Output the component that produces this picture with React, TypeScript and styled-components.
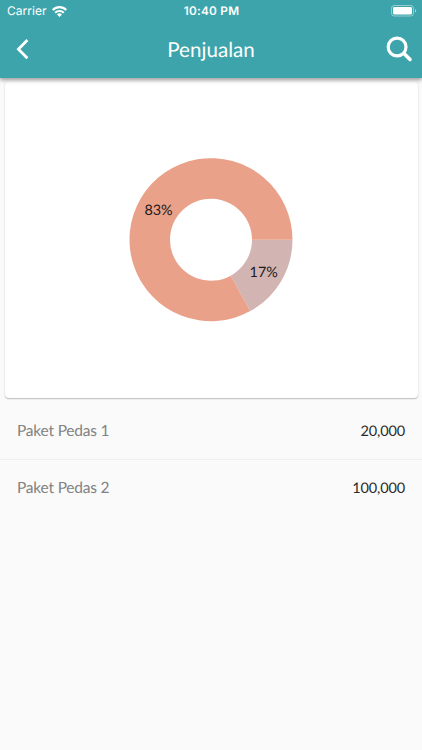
import React from "react";
import styled, { createGlobalStyle } from "styled-components";

const GlobalStyle = createGlobalStyle`
  * { box-sizing: border-box; }
  body {
    margin: 0;
    background: #fafafa;
    font-family: Lato, sans-serif;
    text-rendering: geometricPrecision;
  }
`;

const Screen = styled.main`
  display: flex;
  flex-direction: column;
  height: 750px;
  overflow: hidden;
  background: #fafafa;
`;

const Header = styled.header`
  position: relative;
  z-index: 1;
  height: 78px;
  flex: none;
  background: #3da4ab;
  color: #fff;
  box-shadow: 0 2px 4px rgba(0, 0, 0, 0.32), 0 1px 6px rgba(0, 0, 0, 0.12);
`;

const StatusBar = styled.div`
  display: grid;
  grid-template-columns: 1fr auto 1fr;
  align-items: center;
  height: 22px;
  padding: 0 6px 0 7px;
  font-family: Inter, sans-serif;
  font-size: 12px;
  line-height: 22px;
`;

const Carrier = styled.div`
  display: flex;
  align-items: center;
  gap: 5px;
  letter-spacing: 0.05px;
`;

const Clock = styled.div`
  font-size: 11.8px;
  font-weight: 600;
  letter-spacing: 0.25px;
`;

const Battery = styled.svg`
  justify-self: end;
  margin-right: -1px;
`;

const Toolbar = styled.div`
  display: grid;
  grid-template-columns: 48px 1fr 48px;
  align-items: center;
  height: 56px;
`;

const IconButton = styled.button`
  display: flex;
  width: 48px;
  height: 56px;
  padding: 0;
  border: 0;
  background: none;
  color: inherit;
`;

const Title = styled.h1`
  margin: 0;
  padding-top: 1px;
  font-size: 20.6px;
  font-weight: 400;
  line-height: 55px;
  text-align: center;
`;

const ChartCard = styled.section`
  flex: none;
  height: 316px;
  margin: 4px 4px 4px 5px;
  border-radius: 4px;
  background: #fff;
  box-shadow: 0 1px 1.5px rgba(0, 0, 0, 0.25), 0 0 1px rgba(0, 0, 0, 0.06);
`;

const ChartLabel = styled.text`
  font-family: Lato, sans-serif;
  font-size: 14.4px;
  fill: #211b1a;
  text-anchor: middle;
`;

const List = styled.ul`
  margin: 0;
  padding: 0;
  list-style: none;
`;

const Row = styled.li`
  display: flex;
  align-items: center;
  justify-content: space-between;
  height: 57px;
  padding: 1px 17px 0;
  font-size: 15.5px;

  & + & {
    border-top: 1px solid #f0f0f0;
    padding-top: 0;
  }
`;

const ItemName = styled.span`
  color: #828282;
  letter-spacing: -0.2px;
`;

const Amount = styled.span`
  padding-top: 1px;
  color: #2b2b2b;
  font-size: 14.5px;
  letter-spacing: -0.15px;
`;

const CX = 206;
const CY = 157.7;
const OUTER = 81.5;
const INNER = 41;

function slicePath(from: number, to: number) {
  const point = (radius: number, share: number) => {
    const angle = share * Math.PI * 2;
    return `${CX + radius * Math.cos(angle)} ${CY + radius * Math.sin(angle)}`;
  };
  const large = to - from > 0.5 ? 1 : 0;
  return `M${point(OUTER, from)} A${OUTER} ${OUTER} 0 ${large} 1 ${point(OUTER, to)} L${point(INNER, to)} A${INNER} ${INNER} 0 ${large} 0 ${point(INNER, from)}Z`;
}

const items = [
  { name: "Paket Pedas 1", amount: "20,000" },
  { name: "Paket Pedas 2", amount: "100,000" },
];

export default function App() {
  return (
    <Screen>
      <GlobalStyle />
      <Header>
        <StatusBar>
          <Carrier>
            Carrier
            <svg width="15" height="11" viewBox="0 0 15 11" fill="none" stroke="#fff" strokeWidth="2.1">
              <path d="M.7 4a9.5 9.5 0 0 1 13.6 0" />
              <path d="M3.2 6.7a6.1 6.1 0 0 1 8.6 0" />
              <path d="M7.5 11 5 8.5a3.6 3.6 0 0 1 5 0Z" fill="#fff" stroke="none" />
            </svg>
          </Carrier>
          <Clock>10:40 PM</Clock>
          <Battery width="26" height="12" viewBox="0 0 26 12">
            <rect x=".5" y=".5" width="22" height="10.5" rx="2.8" fill="none" stroke="#fff" strokeOpacity=".45" />
            <rect x="2" y="2" width="19" height="7.5" rx="1.4" fill="#fff" />
            <path d="M24 4a2 2 0 0 1 0 3.7Z" fill="#fff" fillOpacity=".5" />
          </Battery>
        </StatusBar>
        <Toolbar>
          <IconButton aria-label="Back">
            <svg width="48" height="56" viewBox="0 0 48 56" fill="none" stroke="#fff" strokeWidth="2.8">
              <path d="M27.4 18.1 18.4 27.2l9 9.1" />
            </svg>
          </IconButton>
          <Title>Penjualan</Title>
          <IconButton aria-label="Search">
            <svg width="48" height="56" viewBox="0 0 48 56" fill="none" stroke="#fff" strokeWidth="3.2" strokeLinecap="round">
              <circle cx="23.1" cy="25" r="8.9" />
              <path d="m30 31.6 6 6" strokeWidth="3.6" />
            </svg>
          </IconButton>
        </Toolbar>
      </Header>
      <ChartCard>
        <svg width="413" height="316" viewBox="0 0 413 316">
          <path d={slicePath(0, 0.17)} fill="#d2b5b2" />
          <path d={slicePath(0.17, 1)} fill="#eaa18a" />
          <ChartLabel x="153.5" y="132.6">83%</ChartLabel>
          <ChartLabel x="258.7" y="194.6">17%</ChartLabel>
        </svg>
      </ChartCard>
      <List>
        {items.map((item) => (
          <Row key={item.name}>
            <ItemName>{item.name}</ItemName>
            <Amount>{item.amount}</Amount>
          </Row>
        ))}
      </List>
    </Screen>
  );
}
